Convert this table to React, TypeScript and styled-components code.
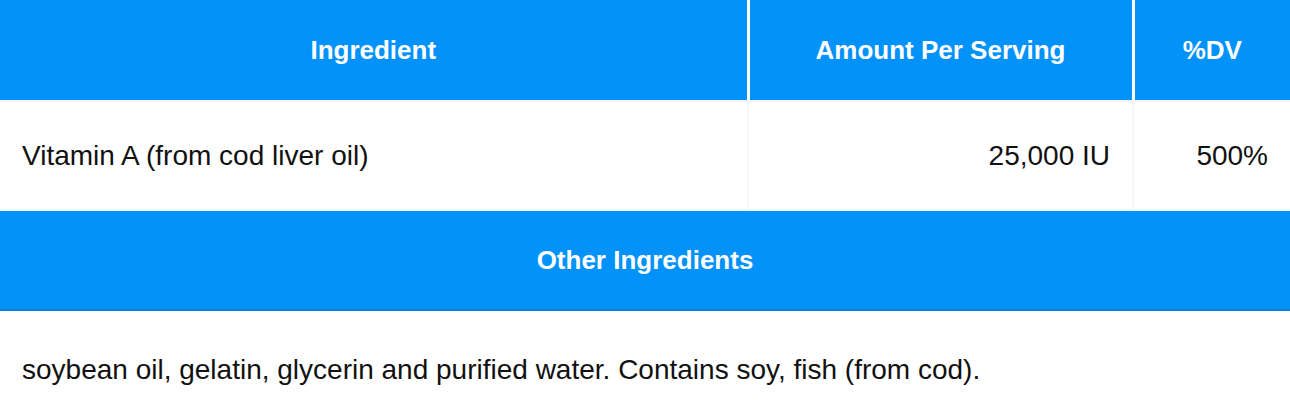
import React from 'react';
import styled, { createGlobalStyle } from 'styled-components';

const GlobalStyle = createGlobalStyle`
  html, body {
    margin: 0;
    padding: 0;
    background: #ffffff;
  }
  body {
    font-family: 'Liberation Sans', Arial, sans-serif;
    color: #111111;
  }
`;

const Table = styled.table`
  width: 100%;
  border-collapse: collapse;
  table-layout: fixed;
`;

const HeadCell = styled.th<{ last?: boolean }>`
  height: 100px;
  padding: 0;
  background: #0391fa;
  color: #ffffff;
  font-size: 26px;
  font-weight: 700;
  text-align: center;
  border-right: ${({ last }) => (last ? 'none' : '3px solid #ffffff')};
  border-bottom: 2px solid #f4f5f7;
`;

const Cell = styled.td<{ align?: 'left' | 'right' }>`
  height: 107px;
  padding: 0 22px;
  font-size: 28px;
  text-align: ${({ align }) => align || 'left'};
  border: 2px solid #f4f5f7;
  border-left: none;
  &:last-child {
    border-right: none;
  }
`;

const SectionCell = styled.th`
  height: 98px;
  padding: 0;
  background: #0391fa;
  color: #ffffff;
  font-size: 26px;
  font-weight: 700;
  text-align: center;
  border-bottom: 2px solid #0b80d8;
`;

const NoteCell = styled.td`
  height: 117px;
  padding: 0 22px;
  font-size: 28px;
  text-align: left;
`;

const rows = [
  { name: 'Vitamin A (from cod liver oil)', amount: '25,000 IU', dv: '500%' },
];

const App: React.FC = () => {
  return (
    <>
      <GlobalStyle />
      <Table>
        <colgroup>
          <col style={{ width: 748 }} />
          <col style={{ width: 385 }} />
          <col />
        </colgroup>
        <thead>
          <tr>
            <HeadCell>Ingredient</HeadCell>
            <HeadCell>Amount Per Serving</HeadCell>
            <HeadCell last>%DV</HeadCell>
          </tr>
        </thead>
        <tbody>
          {rows.map((row) => (
            <tr key={row.name}>
              <Cell>{row.name}</Cell>
              <Cell align="right">{row.amount}</Cell>
              <Cell align="right">{row.dv}</Cell>
            </tr>
          ))}
          <tr>
            <SectionCell colSpan={3}>Other Ingredients</SectionCell>
          </tr>
          <tr>
            <NoteCell colSpan={3}>
              soybean oil, gelatin, glycerin and purified water. Contains soy, fish (from cod).
            </NoteCell>
          </tr>
        </tbody>
      </Table>
    </>
  );
};

export default App;
